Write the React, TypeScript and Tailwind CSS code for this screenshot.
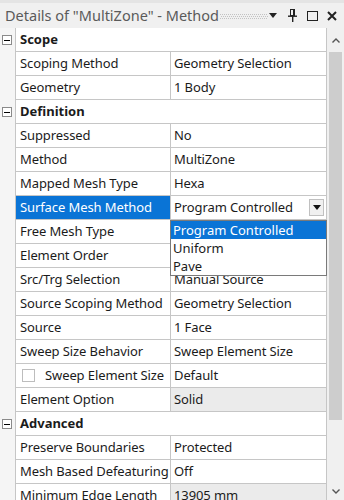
import React from "react";

type Row = { h?: boolean; name: string; value?: string; gray?: boolean; sel?: boolean; check?: boolean };

const rows: Row[] = [
  { h: true, name: "Scope" },
  { name: "Scoping Method", value: "Geometry Selection" },
  { name: "Geometry", value: "1 Body" },
  { h: true, name: "Definition" },
  { name: "Suppressed", value: "No" },
  { name: "Method", value: "MultiZone" },
  { name: "Mapped Mesh Type", value: "Hexa" },
  { name: "Surface Mesh Method", value: "Program Controlled", sel: true },
  { name: "Free Mesh Type", value: "" },
  { name: "Element Order", value: "" },
  { name: "Src/Trg Selection", value: "Manual Source" },
  { name: "Source Scoping Method", value: "Geometry Selection" },
  { name: "Source", value: "1 Face" },
  { name: "Sweep Size Behavior", value: "Sweep Element Size" },
  { name: "Sweep Element Size", value: "Default", check: true },
  { name: "Element Option", value: "Solid", gray: true },
  { h: true, name: "Advanced" },
  { name: "Preserve Boundaries", value: "Protected" },
  { name: "Mesh Based Defeaturing", value: "Off" },
  { name: "Minimum Edge Length", value: "13905 mm", gray: true },
];

function MinusBox() {
  return (
    <div className="w-[10px] h-[10px] border border-[#8a8a8a] bg-white flex items-center justify-center">
      <div className="w-[6px] h-[1px] bg-black" />
    </div>
  );
}

function Pin() {
  return (
    <svg width="10" height="13" viewBox="0 0 10 13" className="shrink-0">
      <rect x="2.5" y="0.5" width="4" height="6" fill="none" stroke="#222" strokeWidth="1" />
      <rect x="5" y="0.5" width="1.6" height="6" fill="#222" />
      <rect x="0" y="6.5" width="9" height="1.4" fill="#222" />
      <rect x="4" y="7" width="1.4" height="6" fill="#222" />
    </svg>
  );
}

function Grip() {
  const n = 24;
  return (
    <svg width={n * 2} height="6" viewBox={`0 0 ${n * 2} 6`} className="shrink-0">
      {Array.from({ length: n }).map((_, i) => (
        <React.Fragment key={i}>
          <rect x={i * 2} y={1} width="1" height="1" fill="#c2c2c2" />
          <rect x={i * 2 + 1} y={3} width="1" height="1" fill="#c2c2c2" />
          <rect x={i * 2} y={5} width="1" height="1" fill="#c2c2c2" />
        </React.Fragment>
      ))}
    </svg>
  );
}

export default function App() {
  return (
    <div
      className="relative w-[344px] h-[500px] overflow-hidden bg-[#f0f0f0] text-[#1b1b1b]"
      style={{ fontFamily: '"Noto Sans", "Open Sans", sans-serif' }}
    >
      {/* Title bar */}
      <div className="h-[28px] flex items-center pl-[5px] pr-[7px] border-t-[3px] border-[#e4e4e4]">
        <div className="text-[14.5px] text-[#5a5a5a] leading-none whitespace-nowrap shrink-0">
          Details of "MultiZone" - Method
        </div>
        <div className="ml-auto shrink-0">
          <Grip />
        </div>
        <div className="ml-[1px] shrink-0">
          <svg width="8" height="5" viewBox="0 0 8 5">
            <path d="M0 0H8L4 5Z" fill="#222" />
          </svg>
        </div>
        <div className="ml-[11px] flex items-center shrink-0">
          <Pin />
        </div>
        <div className="ml-[9px] w-[11px] h-[10px] border-[1.5px] border-[#222] shrink-0" />
        <svg className="ml-[9px] shrink-0" width="10" height="10" viewBox="0 0 10 10">
          <path d="M1 1L9 9M9 1L1 9" stroke="#222" strokeWidth="2" />
        </svg>
      </div>

      <div className="flex">
        {/* table */}
        <div className="flex flex-col">
          {rows.map((r, i) => (
            <div key={i} className="flex h-[24px]">
              <div className="w-[15px] flex items-center justify-start pl-[2px] bg-[#f5f5f5]">
                {r.h ? <MinusBox /> : null}
              </div>
              {r.h ? (
                <div className="w-[312px] flex items-center bg-white border-l border-b border-r border-[#c6c6c6] pl-[4px] text-[13px] font-bold">
                  {r.name}
                </div>
              ) : (
                <>
                  <div
                    className={
                      "w-[155px] flex items-center border-l border-b border-[#c6c6c6] text-[13px] whitespace-nowrap tracking-[-0.1px] " +
                      (r.sel ? "bg-[#0a74d6] text-white" : "bg-white") +
                      (r.check ? " pl-[6px]" : " pl-[4px]")
                    }
                  >
                    {r.check ? (
                      <div className="w-[13px] h-[13px] border border-[#bdbdbd] bg-white mr-[10px]" />
                    ) : null}
                    {r.name}
                  </div>
                  <div
                    className={
                      "w-[157px] flex items-center border-l border-b border-r border-[#c6c6c6] text-[13px] whitespace-nowrap tracking-[-0.1px] " +
                      (r.gray ? "bg-[#ebebeb]" : "bg-white") +
                      (r.sel ? " pl-[3px] pr-[2px] py-[2px]" : " pl-[3px]")
                    }
                  >
                    {r.sel ? (
                      <div className="flex-1 h-[20px] flex items-center justify-between">
                        <span>{r.value}</span>
                        <div className="w-[15px] h-[17px] bg-[#f0f0f0] border border-[#c0c0c0] flex items-center justify-center">
                          <svg width="8" height="5" viewBox="0 0 8 5">
                            <path d="M0 0H8L4 5Z" fill="#111" />
                          </svg>
                        </div>
                      </div>
                    ) : (
                      r.value
                    )}
                  </div>
                </>
              )}
            </div>
          ))}
        </div>

        {/* scrollbar */}
        <div className="w-[17px] h-[472px] bg-[#f0f0f0] flex flex-col items-center">
          <div className="h-[24px] flex items-center justify-center">
            <svg width="8" height="5" viewBox="0 0 8 5">
              <path d="M0.5 4.5L4 1L7.5 4.5" fill="none" stroke="#555" strokeWidth="1.4" />
            </svg>
          </div>
          <div className="w-[13px] h-[368px] bg-[#cdcdcd]" />
          <div className="flex-1" />
          <div className="h-[18px] flex items-center justify-center">
            <svg width="8" height="5" viewBox="0 0 8 5">
              <path d="M0.5 0.5L4 4L7.5 0.5" fill="none" stroke="#555" strokeWidth="1.4" />
            </svg>
          </div>
        </div>
      </div>

      {/* dropdown list */}
      <div className="absolute left-[170px] top-[220px] w-[157px] h-[56px] bg-white border border-[#7a7a7a] text-[13px] leading-none">
        <div className="h-[18px] bg-[#0a74d6] text-white flex items-center pl-[2px]">Program Controlled</div>
        <div className="h-[18px] flex items-center pl-[2px]">Uniform</div>
        <div className="h-[18px] flex items-center pl-[2px]">Pave</div>
      </div>
    </div>
  );
}
